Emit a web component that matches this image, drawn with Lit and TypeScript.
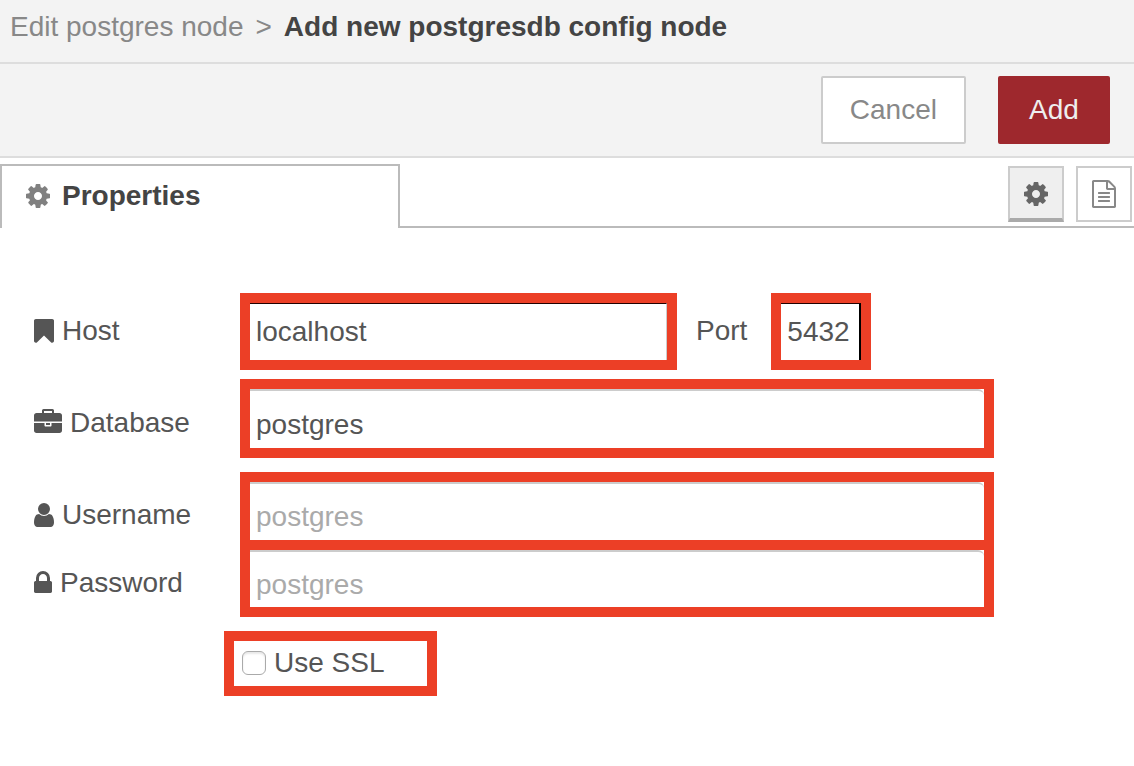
import { LitElement, html, css, svg } from "lit";
import { customElement, property, state } from "lit/decorators.js";

interface Glyph {
  box: string;
  width: number;
  path: string;
}

/* Icon outlines share a 1792-unit em; each box trims the side bearings. */
const GLYPHS: Record<string, Glyph> = {
  cog: {
    box: "128 0 1536 1792",
    width: 24,
    path: "M1152 896q0-106-75-181t-181-75-181 75-75 181 75 181 181 75 181-75 75-181zm512-109v222q0 12-8 23t-20 13l-185 28q-19 54-39 91 35 50 107 138 10 12 10 25t-9 23q-27 37-99 108t-94 71q-12 0-26-9l-138-108q-44 23-91 38-16 136-29 186-7 28-36 28h-222q-14 0-24.5-8.5t-11.5-21.5l-28-184q-49-16-90-37l-141 107q-10 9-25 9-14 0-25-11-126-114-165-168-7-10-7-23 0-12 8-23 15-21 51-66.5t54-70.5q-27-50-41-99l-183-27q-13-2-21-12.5t-8-23.5v-222q0-12 8-23t19-13l186-28q14-46 39-92-40-57-107-138-10-12-10-24 0-10 9-23 26-36 98.5-107.5t94.5-71.5q13 0 26 10l138 107q44-23 91-38 16-136 29-186 7-28 36-28h222q14 0 24.5 8.5t11.5 21.5l28 184q49 16 90 37l142-107q9-9 24-9 13 0 25 10 129 119 165 170 7 8 7 22 0 12-8 23-15 21-51 66.5t-54 70.5q26 50 41 98l183 28q13 2 21 12.5t8 23.5z",
  },
  bookmark: {
    box: "256 0 1280 1792",
    width: 20,
    path: "M1420 128q23 0 44 9 33 13 52.5 41t19.5 62v1289q0 34-19.5 62t-52.5 41q-19 8-44 8-48 0-83-32l-441-424-441 424q-36 33-83 33-23 0-44-9-33-13-52.5-41t-19.5-62v-1289q0-34 19.5-62t52.5-41q21-9 44-9h1048z",
  },
  briefcase: {
    box: "0 0 1792 1792",
    width: 28,
    path: "M640 256h512v-128h-512v128zm1152 640v480q0 66-47 113t-113 47h-1472q-66 0-113-47t-47-113v-480h672v160q0 26 19 45t45 19h320q26 0 45-19t19-45v-160h672zm-768 0v128h-256v-128h256zm768-480v384h-1792v-384q0-66 47-113t113-47h352v-160q0-40 28-68t68-28h576q40 0 68 28t28 68v160h352q66 0 113 47t47 113z",
  },
  user: {
    box: "256 0 1280 1792",
    width: 20,
    path: "M1536 1399q0 109-62.5 187t-150.5 78h-854q-88 0-150.5-78t-62.5-187q0-85 8.5-160.5t31.5-152 58.5-131 94-89 134.5-34.5q131 128 313 128t313-128q76 0 134.5 34.5t94 89 58.5 131 31.5 152 8.5 160.5zm-256-887q0 159-112.5 271.5t-271.5 112.5-271.5-112.5-112.5-271.5 112.5-271.5 271.5-112.5 271.5 112.5 112.5 271.5z",
  },
  lock: {
    box: "320 0 1152 1792",
    width: 18,
    path: "M640 768h512v-192q0-106-75-181t-181-75-181 75-75 181v192zm832 96v576q0 40-28 68t-68 28h-960q-40 0-68-28t-28-68v-576q0-40 28-68t68-28h32v-192q0-184 132-316t316-132 316 132 132 316v192h32q40 0 68 28t28 68z",
  },
  document: {
    box: "128 0 1536 1792",
    width: 24,
    path: "M1596 380q28 28 48 76t20 88v1152q0 40-28 68t-68 28h-1344q-40 0-68-28t-28-68v-1600q0-40 28-68t68-28h896q40 0 88 20t76 48zm-444-244v376h376q-10-29-22-41l-313-313q-12-12-41-22zm384 1528v-1024h-416q-40 0-68-28t-28-68v-416h-768v1536h1280zm-1024-864q0-14 9-23t23-9h704q14 0 23 9t9 23v64q0 14-9 23t-23 9h-704q-14 0-23-9t-9-23v-64zm736 224q14 0 23 9t9 23v64q0 14-9 23t-23 9h-704q-14 0-23-9t-9-23v-64q0-14 9-23t23-9h704zm0 256q14 0 23 9t9 23v64q0 14-9 23t-23 9h-704q-14 0-23-9t-9-23v-64q0-14 9-23t23-9h704z",
  },
};

@customElement("glyph-icon")
class GlyphIcon extends LitElement {
  static styles = css`
    :host {
      display: inline-flex;
      flex: none;
    }
    .glyph {
      display: block;
      fill: currentColor;
    }
  `;

  @property() name = "cog";

  render() {
    const g = GLYPHS[this.name];
    return html`<svg class="glyph" width=${g.width} height="28" viewBox=${g.box} aria-hidden="true">
      ${svg`<path d=${g.path}></path>`}
    </svg>`;
  }
}

@customElement("app-root")
class AppRoot extends LitElement {
  static styles = css`
    :host {
      display: block;
      min-height: 100vh;
      background: #fff;
      color: #555;
      font: 28px/32px "Liberation Sans", Arial, sans-serif;
    }
    * {
      box-sizing: border-box;
    }
    button,
    input {
      font: inherit;
      margin: 0;
    }
    .crumbs {
      display: flex;
      gap: 12px;
      padding: 11px 10px 19px;
      background: #f3f3f3;
      border-bottom: 2px solid #ddd;
      color: #888;
      white-space: nowrap;
    }
    .crumbs a {
      color: inherit;
      text-decoration: none;
    }
    .crumbs h1 {
      margin: 0;
      font: inherit;
      font-weight: bold;
      color: #444;
    }
    .toolbar {
      display: flex;
      justify-content: flex-end;
      gap: 32px;
      padding: 12px 24px;
      background: #f3f3f3;
      border-bottom: 2px solid #ddd;
    }
    .action {
      min-width: 112px;
      height: 68px;
      padding: 0 27px;
      border: 2px solid #ccc;
      border-radius: 2px;
      background: #fff;
      color: #888;
    }
    .action.primary {
      border-color: #9e282d;
      background: #9e282d;
      color: #eee;
    }
    .tabs {
      display: flex;
      padding-top: 6px;
    }
    .tab {
      display: flex;
      align-items: center;
      gap: 12px;
      width: 400px;
      height: 64px;
      padding: 0 24px 2px;
      border: 2px solid #bbb;
      border-bottom: 0;
      background: #fff;
      color: #444;
      font-weight: bold;
    }
    .tab glyph-icon {
      color: #808080;
    }
    .views {
      display: flex;
      flex: 1;
      justify-content: flex-end;
      gap: 12px;
      padding: 2px 2px 4px;
      border-bottom: 2px solid #bbb;
    }
    .view {
      display: flex;
      align-items: center;
      justify-content: center;
      width: 56px;
      height: 56px;
      padding: 0;
      border: 2px solid #ccc;
      background: #fff;
      color: #888;
    }
    .view.selected {
      padding-top: 2px;
      border-bottom: 4px solid #aaa;
      background: #efefef;
      color: #666;
    }
    .form {
      display: flex;
      flex-direction: column;
      padding: 65px 140px 64px 34px;
    }
    .row {
      display: grid;
      grid-template-columns: 206px 1fr;
      margin-bottom: 14px;
    }
    .row.tight {
      margin-bottom: 9px;
    }
    .label {
      display: flex;
      align-items: center;
      gap: 8px;
    }
    .label.low {
      padding-top: 8px;
    }
    .labels {
      display: grid;
      grid-template-rows: 58px 57px;
      gap: 10px;
      padding: 10px 0;
    }
    .host {
      display: flex;
      align-items: center;
    }
    .port {
      padding: 0 24px 0 19px;
    }
    .tight .label,
    .port {
      padding-bottom: 2px;
    }
    .mark {
      display: grid;
      border: 10px solid #ec3f26;
    }
    .mark.wide {
      width: 437px;
    }
    .mark.narrow {
      width: 100px;
    }
    .mark.pair {
      gap: 10px;
      background: #ec3f26;
    }
    .field {
      display: grid;
      background: #fff;
    }
    .text {
      width: 100%;
      min-width: 0;
      height: 57px;
      padding: 0 6px;
      border: 0;
      border-radius: 0;
      outline: 0;
      background: #fff;
      color: #555;
    }
    .text::placeholder {
      color: #aaa;
      opacity: 1;
    }
    .host .text {
      border-top: 1px solid #200;
    }
    .mark.wide .text {
      border-right: 1px solid #ccc;
    }
    .mark.narrow .text {
      border-right: 2px solid #000;
    }
    .text.low {
      padding-top: 10px;
      border-top: 2px solid #ccc;
      border-top-right-radius: 6px;
    }
    .text.database {
      height: 59px;
    }
    .text.username {
      height: 58px;
    }
    .ssl {
      display: flex;
      align-items: center;
      align-self: flex-start;
      gap: 8px;
      width: 213px;
      height: 65px;
      margin-left: 190px;
      padding: 0 8px 2px;
      border: 10px solid #ec3f26;
    }
    .check {
      appearance: none;
      width: 24px;
      height: 24px;
      border: 1px solid #aaa;
      border-radius: 6px;
      background: #fff;
      box-shadow: inset 0 2px 2px #e8e8e8;
    }
    .check:checked {
      background: #888;
    }
  `;

  @state() private view = "settings";

  private viewButton(id: string, icon: string, title: string) {
    return html`<button
      class="view ${this.view === id ? "selected" : ""}"
      type="button"
      aria-label=${title}
      @click=${() => (this.view = id)}
    ><glyph-icon name=${icon}></glyph-icon></button>`;
  }

  render() {
    return html`
      <header class="crumbs">
        <a href="#">Edit postgres node</a>
        <span>&gt;</span>
        <h1>Add new postgresdb config node</h1>
      </header>
      <div class="toolbar">
        <button class="action" type="button">Cancel</button>
        <button class="action primary" type="submit" form="config">Add</button>
      </div>
      <nav class="tabs">
        <button class="tab" type="button"><glyph-icon name="cog"></glyph-icon>Properties</button>
        <div class="views">
          ${this.viewButton("settings", "cog", "Properties")}
          ${this.viewButton("description", "document", "Description")}
        </div>
      </nav>
      <form class="form" id="config" @submit=${(e: Event) => e.preventDefault()}>
        <div class="row tight">
          <label class="label" for="host"><glyph-icon name="bookmark"></glyph-icon>Host</label>
          <div class="host">
            <div class="mark wide"><input class="text" id="host" type="text" value="localhost" /></div>
            <label class="port" for="port">Port</label>
            <div class="mark narrow"><input class="text" id="port" type="text" value="5432" /></div>
          </div>
        </div>
        <div class="row">
          <label class="label low" for="database"><glyph-icon name="briefcase"></glyph-icon>Database</label>
          <div class="mark"><input class="text low database" id="database" type="text" value="postgres" /></div>
        </div>
        <div class="row">
          <div class="labels">
            <label class="label low" for="username"><glyph-icon name="user"></glyph-icon>Username</label>
            <label class="label low" for="password"><glyph-icon name="lock"></glyph-icon>Password</label>
          </div>
          <div class="mark pair">
            <div class="field">
              <input class="text low username" id="username" type="text" placeholder="postgres" />
            </div>
            <div class="field">
              <input class="text low" id="password" type="password" placeholder="postgres" />
            </div>
          </div>
        </div>
        <label class="ssl"><input class="check" type="checkbox" />Use SSL</label>
      </form>
    `;
  }
}
